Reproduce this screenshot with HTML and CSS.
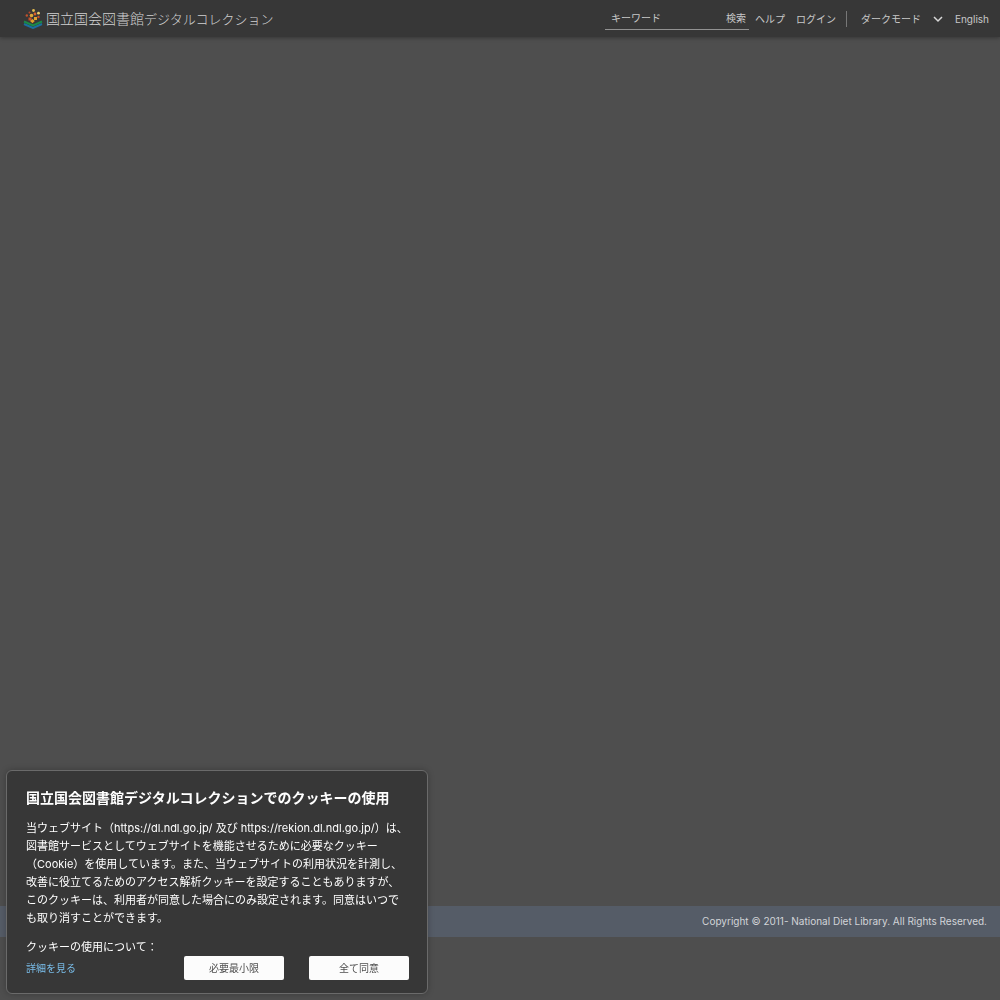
FILE: index.html
```html
<!DOCTYPE html>
<html lang="ja">
<head>
<meta charset="utf-8">
<meta name="viewport" content="width=device-width, initial-scale=1">
<title>国立国会図書館デジタルコレクション</title>
<link rel="stylesheet" href="styles.css">
</head>
<body>
<header class="header">
  <a class="brand" href="#">
    <svg class="brand-mark" viewBox="0 0 20 20" aria-hidden="true">
      <path d="m1 15 9 4 9-4" fill="none" stroke="#1a6f9f" stroke-width="2"/>
      <path d="m1 12.500 9 4 9-4" fill="none" stroke="#1b8a48" stroke-width="2"/>
      <path d="M5.500 8.500h3v3h-3z" fill="#c4502a"/>
      <path d="m9.500 10 2.300 2-2.300 2.200L7 12z" fill="#e2a32c"/>
      <path d="M11 8h3v3h-3z" fill="#e0a12d"/>
      <circle cx="8.500" cy="6.500" r="1.800" fill="#dfaa38"/>
      <circle cx="3.800" cy="6.500" r="1.200" fill="#c4502a"/>
      <circle cx="12" cy="5" r="1.400" fill="#d9602b"/>
      <circle cx="6.500" cy="3.500" r="1" fill="#b8452a"/>
      <circle cx="10.500" cy="1.500" r="1.400" fill="#e1b94d"/>
      <circle cx="15.500" cy="4.200" r="1.400" fill="#f0ce68"/>
      <circle cx="15.500" cy="8" r="1.200" fill="#c4502a"/>
    </svg>
    <span class="brand-name">国立国会図書館<span class="brand-kana">デジタルコレクション</span></span>
  </a>
  <form class="search">
    <input class="search-input" type="text" placeholder="キーワード" aria-label="キーワード">
    <button class="search-button" type="button">検索</button>
  </form>
  <nav class="nav">
    <a href="#">ヘルプ</a>
    <a href="#">ログイン</a>
  </nav>
  <div class="theme">
    <select class="theme-select" aria-label="表示モード"><option>ダークモード</option></select>
    <svg class="chevron" viewBox="0 0 10 10" aria-hidden="true"><path d="m1 3 4 4 4-4"/></svg>
  </div>
  <a class="language" href="#" lang="en">English</a>
</header>
<main class="content"></main>
<footer class="footer" lang="en">Copyright © 2011- National Diet Library. All Rights Reserved.</footer>
<section class="consent" role="dialog" aria-labelledby="consent-title">
  <h2 class="consent-title" id="consent-title">国立国会図書館デジタルコレクションでのクッキーの使用</h2>
  <p class="consent-text">当ウェブサイト（https://dl.ndl.go.jp/ 及び https://rekion.dl.ndl.go.jp/）は、図書館サービスとしてウェブサイトを機能させるために必要なクッキー（Cookie）を使用しています。また、当ウェブサイトの利用状況を計測し、改善に役立てるためのアクセス解析クッキーを設定することもありますが、このクッキーは、利用者が同意した場合にのみ設定されます。同意はいつでも取り消すことができます。</p>
  <p class="consent-about">クッキーの使用について：</p>
  <div class="consent-actions">
    <a class="details" href="#">詳細を見る</a>
    <button class="choice" type="button">必要最小限</button>
    <button class="choice" type="button">全て同意</button>
  </div>
</section>
</body>
</html>
```
FILE: styles.css
```css
* {
  box-sizing: border-box;
}

body {
  margin: 0;
  min-height: 100vh;
  display: flex;
  flex-direction: column;
  padding-bottom: 63px;
  background: #4e4e4e;
  color: #fff;
  font: 11px/18px Inter, "Noto Sans CJK JP", sans-serif;
}

a {
  color: inherit;
  text-decoration: none;
}

button,
input,
select {
  font: inherit;
  color: inherit;
  margin: 0;
  padding: 0;
  border: 0;
  border-radius: 0;
  background: none;
}

.header {
  display: flex;
  align-items: center;
  height: 37px;
  padding: 0 11px 0 23px;
  background: #373737;
  box-shadow: 0 1px 4px rgba(0, 0, 0, 0.3);
  color: #c8c8c8;
  font-size: 10px;
}

.brand {
  display: flex;
  align-items: center;
  gap: 3px;
  margin-right: auto;
  color: #d0d0d0;
}

.brand-mark {
  width: 20px;
  height: 20px;
}

.brand-name {
  font-size: 14px;
  font-weight: 300;
  white-space: nowrap;
}

.brand-kana {
  font-size: 13px;
}

.search {
  display: flex;
  width: 144px;
  height: 22px;
  border-bottom: 1px solid #929292;
}

.search-input {
  flex: 1;
  min-width: 0;
  padding-left: 6px;
  outline: 0;
}

.search-input::placeholder {
  color: #c8c8c8;
  opacity: 1;
}

.search-button {
  padding-right: 3px;
}

.nav {
  display: flex;
  gap: 11px;
  padding: 0 10px 0 6px;
}

.theme {
  display: flex;
  align-items: center;
  height: 16px;
  padding-left: 14px;
  border-left: 1px solid #777;
}

.theme-select {
  width: 72px;
  appearance: none;
}

.chevron {
  width: 10px;
  height: 10px;
  fill: none;
  stroke: #d8d8d8;
  stroke-width: 1.5;
}

.language {
  margin-left: 12px;
}

.content {
  flex: 1;
}

.footer {
  padding: 6px 13px;
  background: #555c67;
  color: #d2d4d8;
  font-size: 10px;
  line-height: 19px;
  text-align: right;
}

.consent {
  position: fixed;
  left: 6px;
  bottom: 6px;
  width: 422px;
  max-width: calc(100% - 12px);
  padding: 17px 18px 13px 19px;
  border: 1px solid #6a6a6a;
  border-radius: 6px;
  background: #373737;
  box-shadow: 0 0 6px rgba(0, 0, 0, 0.25);
}

.consent-title {
  margin: 0 0 11px;
  font-size: 14px;
  line-height: 20px;
}

.consent-text {
  margin: 0 0 11px;
}

.consent-about {
  margin: 0;
}

.consent-actions {
  display: flex;
  align-items: center;
  gap: 25px;
  font-size: 10px;
}

.details {
  margin-right: auto;
  color: #79bce8;
}

.choice {
  width: 100px;
  height: 24px;
  border-radius: 2px;
  background: #fcfcfc;
  color: #4e4e4e;
}
```
